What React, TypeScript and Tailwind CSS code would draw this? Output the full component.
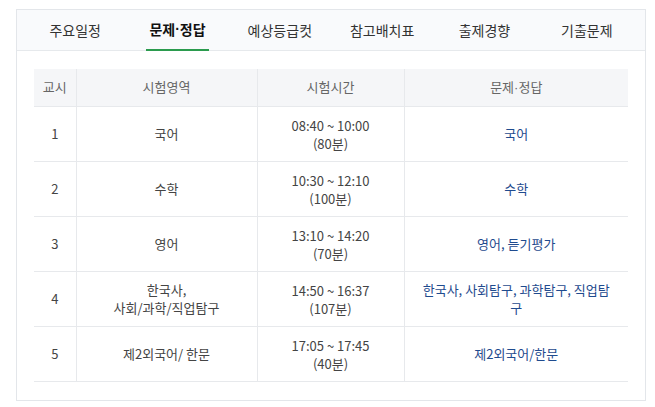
import React from "react";

const Dot = () => <span className="font-['Liberation_Sans']">·</span>;

const tabs: React.ReactNode[] = [
  "주요일정",
  <>
    문제<Dot />정답
  </>,
  "예상등급컷",
  "참고배치표",
  "출제경향",
  "기출문제",
];

const rows: { n: string; area: React.ReactNode; time: string; dur: string; link: React.ReactNode }[] = [
  { n: "1", area: "국어", time: "08:40 ~ 10:00", dur: "(80분)", link: "국어" },
  { n: "2", area: "수학", time: "10:30 ~ 12:10", dur: "(100분)", link: "수학" },
  { n: "3", area: "영어", time: "13:10 ~ 14:20", dur: "(70분)", link: "영어, 듣기평가" },
  {
    n: "4",
    area: (
      <>
        한국사,
        <br />
        사회/과학/직업탐구
      </>
    ),
    time: "14:50 ~ 16:37",
    dur: "(107분)",
    link: "한국사, 사회탐구, 과학탐구, 직업탐구",
  },
  { n: "5", area: "제2외국어/ 한문", time: "17:05 ~ 17:45", dur: "(40분)", link: "제2외국어/한문" },
];

export default function App() {
  return (
    <div
      className="w-[655px] h-[407px] bg-white pt-[9px] pl-[16px]"
      style={{ fontFamily: '"Noto Sans CJK KR", "Noto Sans", sans-serif' }}
    >
      <div className="w-[630px] h-[392px] border border-[#e3e6ea] bg-white">
        <div className="h-[41px] bg-[#f9fafc] border-b border-[#e6e9ec] flex px-[7px]">
          {tabs.map((t, i) => (
            <div key={i} className="flex-1 flex justify-center items-stretch">
              <span
                className={
                  i === 1
                    ? "flex items-center px-[3px] border-b-2 border-[#2b9b4e] text-[14px] font-bold text-[#111] -mb-px"
                    : "flex items-center px-[3px] text-[14px] text-[#333]"
                }
              >
                {t}
              </span>
            </div>
          ))}
        </div>
        <div className="px-[17px] pt-[18px]">
          <table className="w-[594px] border-collapse text-[13px] leading-[18px] text-center">
            <thead>
              <tr className="h-[37px] bg-[#f5f6f8] text-[#666]">
                <th className="w-[42px] font-normal border-r border-b border-[#e7e9ec]">교시</th>
                <th className="w-[181px] font-normal border-r border-b border-[#e7e9ec]">시험영역</th>
                <th className="w-[147px] font-normal border-r border-b border-[#e7e9ec]">시험시간</th>
                <th className="font-normal border-b border-[#e7e9ec]">
                  문제<Dot />정답
                </th>
              </tr>
            </thead>
            <tbody className="text-[#444]">
              {rows.map((r) => (
                <tr key={r.n} className="h-[55px]">
                  <td className="border-r border-b border-[#e7e9ec]">{r.n}</td>
                  <td className="border-r border-b border-[#e7e9ec]">{r.area}</td>
                  <td className="border-r border-b border-[#e7e9ec] pt-[2px]">
                    {r.time}
                    <br />
                    {r.dur}
                  </td>
                  <td className="border-b border-[#e7e9ec] px-[15px] text-[#1f4b8e]">{r.link}</td>
                </tr>
              ))}
            </tbody>
          </table>
        </div>
      </div>
    </div>
  );
}
